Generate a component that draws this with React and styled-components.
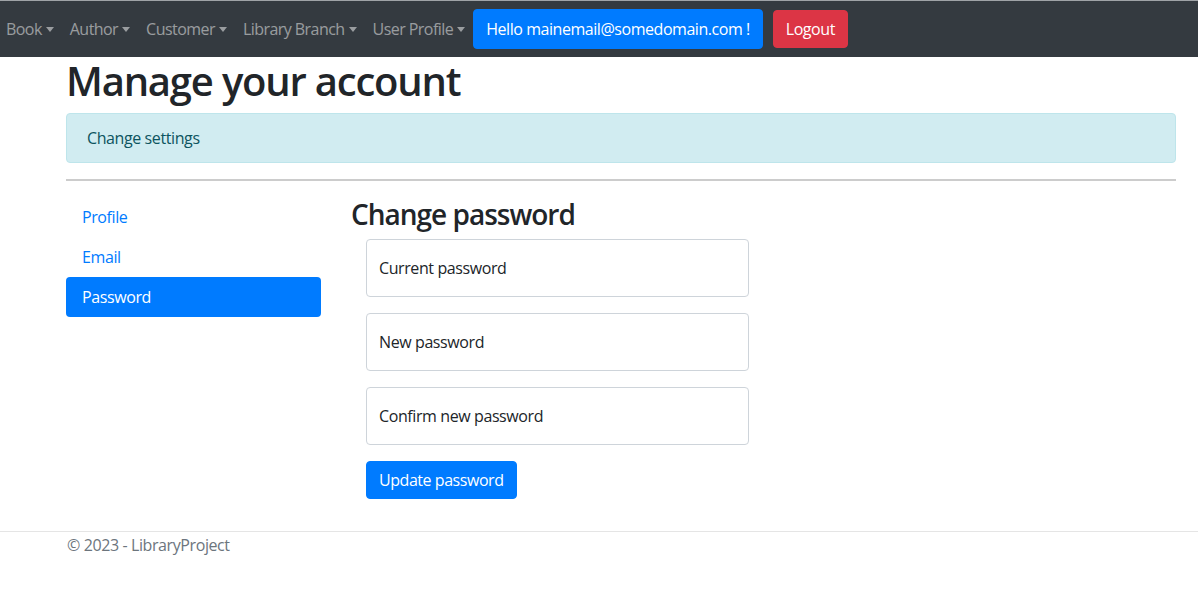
import React from 'react';
import styled, { createGlobalStyle } from 'styled-components';

const GlobalStyle = createGlobalStyle`
  body {
    margin: 0;
    font-family: "Open Sans", "Noto Sans", sans-serif;
    font-size: 16px;
    line-height: 24px;
    color: #212529;
    background: #fff;
  }
  * { box-sizing: border-box; }
`;

const Navbar = styled.nav`
  display: flex;
  align-items: center;
  height: 57px;
  background-color: #343a40;
  border-top: 1px solid #9fa3a7;
  overflow: hidden;
`;

const NavList = styled.ul`
  display: flex;
  align-items: center;
  list-style: none;
  margin: 0 0 0 -2px;
  padding: 0;
`;

const NavLink = styled.li`
  padding: 0 8px;
  color: rgba(255, 255, 255, 0.5);
  white-space: nowrap;
  letter-spacing: -0.55px;

  &::after {
    content: "";
    display: inline-block;
    margin-left: 4px;
    vertical-align: 3px;
    border-top: 5px solid;
    border-right: 4px solid transparent;
    border-left: 4px solid transparent;
  }
`;

const Button = styled.button`
  font: inherit;
  letter-spacing: -0.45px;
  color: #fff;
  background-color: ${props => props.variant === 'danger' ? '#dc3545' : '#007bff'};
  border: 1px solid ${props => props.variant === 'danger' ? '#dc3545' : '#007bff'};
  border-radius: 4px;
  padding: ${props => props.tall ? '7px 12px' : '6px 12px'};
  line-height: 24px;
  margin-left: ${props => props.gap || 0}px;
  white-space: nowrap;
`;

const Main = styled.main`
  width: 1176px;
  padding-left: 66px;
`;

const Title = styled.h1`
  font-size: 40px;
  font-weight: 600;
  line-height: 48px;
  margin: 0 0 8px;
  letter-spacing: -1.2px;
`;

const Alert = styled.div`
  background-color: #d1ecf1;
  border: 1px solid #bee5eb;
  color: #0c5460;
  border-radius: 4px;
  padding: 12px 20px;
  letter-spacing: -0.4px;
`;

const Rule = styled.hr`
  margin: 16px 0;
  border: 0;
  border-top: 2px solid #cccccc;
`;

const Row = styled.div`
  display: flex;
  gap: 30px;
`;

const SideNav = styled.ul`
  list-style: none;
  margin: 0;
  padding: 0;
  width: 255px;
  flex-shrink: 0;
`;

const Pill = styled.li`
  padding: 8px 16px;
  border-radius: 4px;
  letter-spacing: -0.4px;
  color: ${props => props.active ? '#fff' : '#007bff'};
  background-color: ${props => props.active ? '#007bff' : 'transparent'};
`;

const Content = styled.section`
  flex: 1;
`;

const SubTitle = styled.h3`
  font-size: 28px;
  font-weight: 600;
  line-height: 34px;
  margin: 0 0 8px;
  letter-spacing: -1px;
`;

const Form = styled.form`
  padding-left: 15px;
  width: 398px;
`;

const Field = styled.div`
  display: flex;
  align-items: center;
  height: 58px;
  padding: 0 12px;
  margin-bottom: 16px;
  border: 1px solid #ced4da;
  border-radius: 4px;
  color: #212529;
  letter-spacing: -0.4px;
`;

const Footer = styled.footer`
  margin-top: 32px;
  border-top: 1px solid #e5e5e5;
  padding: 1px 0 0 67px;
  color: #6c757d;
  letter-spacing: -0.4px;
`;

const navItems = ['Book', 'Author', 'Customer', 'Library Branch', 'User Profile'];
const fields = ['Current password', 'New password', 'Confirm new password'];

const App = () => (
  <>
    <GlobalStyle />
    <Navbar>
      <NavList>
        {navItems.map(item => <NavLink key={item}>{item}</NavLink>)}
      </NavList>
      <Button tall>Hello mainemail@somedomain.com !</Button>
      <Button variant="danger" gap={10}>Logout</Button>
    </Navbar>
    <Main>
      <Title>Manage your account</Title>
      <Alert>Change settings</Alert>
      <Rule />
      <Row>
        <SideNav>
          <Pill>Profile</Pill>
          <Pill>Email</Pill>
          <Pill active>Password</Pill>
        </SideNav>
        <Content>
          <SubTitle>Change password</SubTitle>
          <Form onSubmit={e => e.preventDefault()}>
            {fields.map(f => <Field key={f}>{f}</Field>)}
            <Button type="button">Update password</Button>
          </Form>
        </Content>
      </Row>
    </Main>
    <Footer>© 2023 - LibraryProject</Footer>
  </>
);

export default App;
